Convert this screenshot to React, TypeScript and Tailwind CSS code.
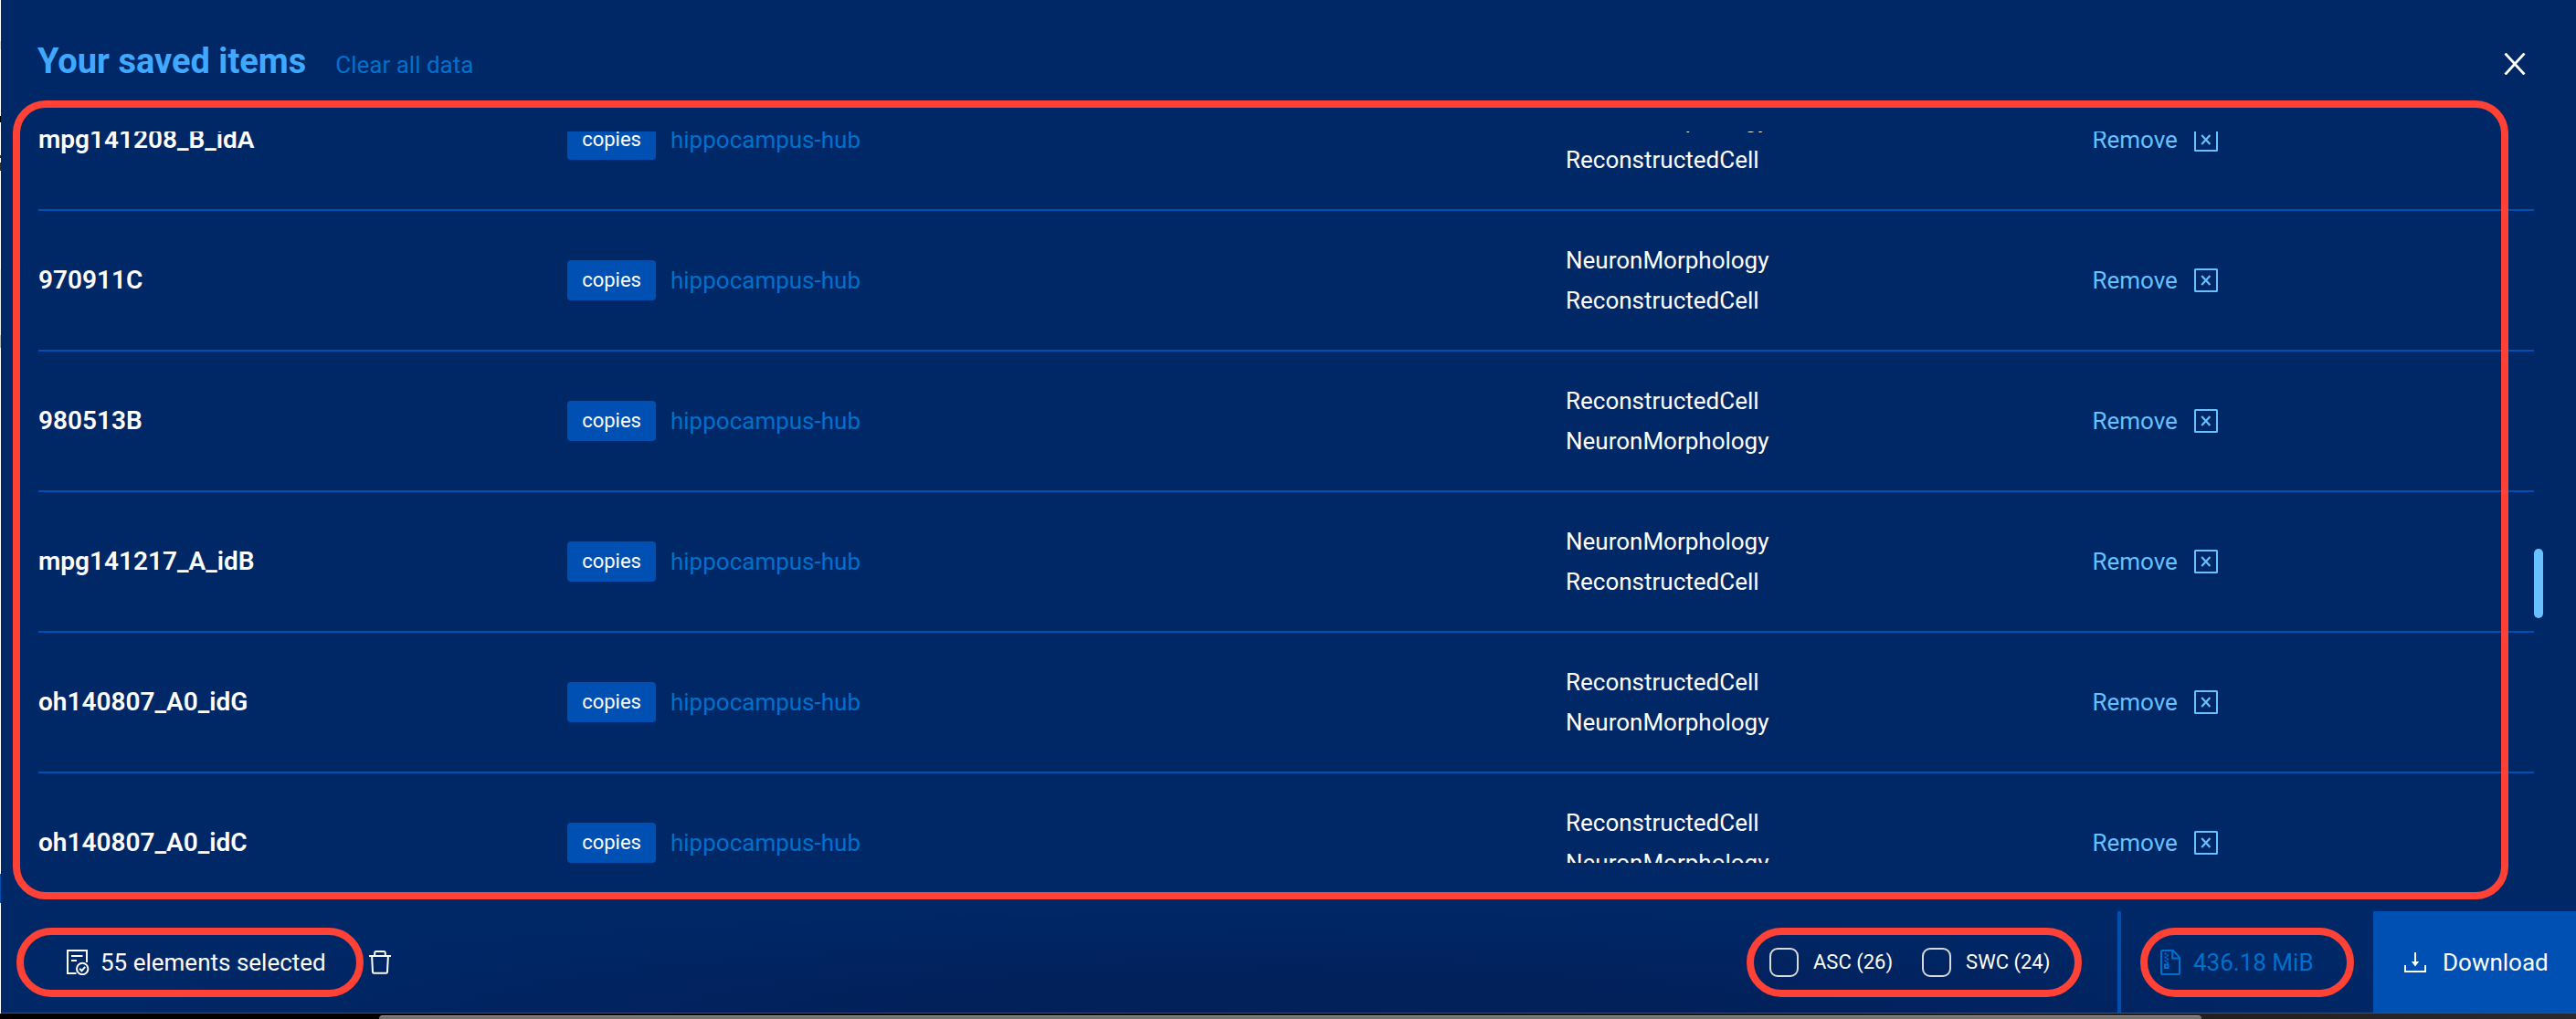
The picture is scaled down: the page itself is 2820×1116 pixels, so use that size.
import React from "react";

type Item = { name: string; types: [string, string] };

const NM = "NeuronMorphology";
const RC = "ReconstructedCell";

const items: Item[] = [
  { name: "mpg141208_B_idA", types: [NM, RC] },
  { name: "970911C", types: [NM, RC] },
  { name: "980513B", types: [RC, NM] },
  { name: "mpg141217_A_idB", types: [NM, RC] },
  { name: "oh140807_A0_idG", types: [RC, NM] },
  { name: "oh140807_A0_idC", types: [RC, NM] },
];

function CloseIcon() {
  return (
    <svg width="24" height="24" viewBox="0 0 24 24" fill="none" stroke="currentColor" strokeWidth="2.8">
      <path d="M1.5 0.5 22.5 23.5M22.5 0.5 1.5 23.5" />
    </svg>
  );
}

function BoxedXIcon() {
  return (
    <svg width="26" height="26" viewBox="0 0 26 26" fill="none" stroke="currentColor">
      <rect x="1" y="1" width="24" height="24" rx="0.5" strokeWidth="2" />
      <path d="M8.200 8 17.400 18M17.400 8 8.200 18" strokeWidth="2.200" />
    </svg>
  );
}

function DocCheckIcon() {
  return (
    <svg width="25" height="28" viewBox="0 0 25 28" fill="none" stroke="currentColor" strokeWidth="2">
      <path d="M10.500 26H1V1h21v13" />
      <path d="M5 7h12.500M5 12h6" />
      <circle cx="17.200" cy="21" r="6.200" />
      <path d="m14.200 20.800 2.300 2.400 3.700-4.400" />
    </svg>
  );
}

function TrashIcon() {
  return (
    <svg width="24" height="26" viewBox="0 0 24 26" fill="none" stroke="currentColor" strokeWidth="2">
      <path d="M0 6h24M6.200 6V2.500Q6.200 1 7.600 1h8.800q1.400 0 1.400 1.500V6M3.100 6l.9 17.400q0 1.400 1.400 1.400h13.200q1.400 0 1.400-1.400L20.900 6" />
    </svg>
  );
}

function ZipIcon() {
  return (
    <svg width="22" height="28" viewBox="0 0 22 28" fill="none" stroke="currentColor" strokeWidth="2">
      <path d="M1 2.200Q1 1 2.200 1H14l7 7.600v17.200q0 1.200-1.200 1.200H2.200Q1 27 1 25.800Z" />
      <path d="M13.200 1v8.600H21" />
      <path d="M5.600 3.500v2M7.800 5.500v2M5.600 7.500v2M7.800 9.500v2M5.600 11.500v2M7.800 13.500v2" />
      <path d="M5 16.500h3.500V20H5Z" />
    </svg>
  );
}

function DownloadIcon() {
  return (
    <svg width="24" height="22" viewBox="0 0 24 22" fill="none" stroke="currentColor" strokeWidth="2">
      <path d="M1 14v7h22v-7M12 0v11" />
      <path d="m7.800 10 4.200 5.600L16.200 10Z" fill="currentColor" stroke="none" />
    </svg>
  );
}

function FormatOption({ id, label }: { id: string; label: string }) {
  return (
    <div className="flex items-center gap-4">
      <input
        id={id}
        type="checkbox"
        className="size-8 shrink-0 appearance-none rounded-[9px] border-2 border-[#d9d9d9] checked:bg-[#0050b3]"
      />
      <label htmlFor={id} className="text-[22px] leading-8 whitespace-nowrap">
        {label}
      </label>
    </div>
  );
}

export default function App() {
  return (
    <div className="flex h-screen flex-col overflow-hidden bg-black font-['Roboto',sans-serif] text-[26px] leading-[44px] text-white">
      <div className="flex min-h-0 flex-1">
        <div className="w-px shrink-0 bg-[linear-gradient(#fff_0_45px,#ddd_45px_54px,#fff_54px_127px,#000_127px_134px,#fff_134px_170px,#333_170px_173px,#fff_173px_178px,#333_178px_187px,#fff_187px_295px,#eee_295px_367px,#bbb_367px_381px,#fff_381px_957px,#0050b3_957px_989px,#fff_989px)]" />
        <div className="flex min-w-0 flex-1 flex-col bg-[#002766]">
          <header className="flex h-36 shrink-0 items-start justify-between pt-[43px] pr-[55px] pl-10">
            <div className="flex items-baseline gap-8">
              <h1 className="text-[38px] leading-[48px] font-bold text-[#40a9ff]">Your saved items</h1>
              <button type="button" className="text-[#0070cc]">
                Clear all data
              </button>
            </div>
            <button type="button" aria-label="Close" className="mt-[15px]">
              <CloseIcon />
            </button>
          </header>

          <main className="relative flex min-h-0 flex-1 pr-9 pb-[53px] pl-[41px]">
            <div className="min-w-0 flex-1 overflow-hidden">
              <table className="-mt-[68px] w-full table-fixed border-collapse text-left">
                <colgroup>
                  <col className="w-[21.2%]" />
                  <col className="w-[40%]" />
                  <col className="w-[21.1%]" />
                  <col />
                </colgroup>
                <tbody>
                  {items.map((item) => (
                    <tr key={item.name} className="h-[154px] border-b-2 border-[#0050b3]">
                      <th scope="row" className="text-[28px] font-semibold">
                        {item.name}
                      </th>
                      <td>
                        <div className="flex items-center gap-4">
                          <span className="rounded bg-[#0050b3] px-4 text-[22px]">copies</span>
                          <a href="#hippocampus-hub" className="text-[#0070cc]">
                            hippocampus-hub
                          </a>
                        </div>
                      </td>
                      <td>
                        {item.types.map((type) => (
                          <div key={type}>{type}</div>
                        ))}
                      </td>
                      <td>
                        <button type="button" className="flex items-center gap-[18px] text-[#69c0ff]">
                          Remove
                          <BoxedXIcon />
                        </button>
                      </td>
                    </tr>
                  ))}
                </tbody>
              </table>
            </div>
            <div className="w-[10px] shrink-0">
              <div className="mt-[457px] h-[76px] rounded-full bg-[#69c0ff]" />
            </div>
            <div className="pointer-events-none absolute -top-[34px] right-[74px] bottom-[13px] left-[13px] rounded-[36px] border-8 border-[#ff4136]" />
          </main>

          <footer className="flex h-28 shrink-0 items-center border-b border-[#33507f] bg-[radial-gradient(ellipse_45%_100%_at_50%_100%,#02205a_30%,#002766)]">
            <div className="ml-[17px] flex h-[76px] w-[380px] items-center gap-3 rounded-full border-8 border-[#ff4136] pl-[47px] whitespace-nowrap">
              <DocCheckIcon />
              55 elements selected
            </div>
            <button type="button" aria-label="Remove selected elements" className="ml-1.5">
              <TrashIcon />
            </button>
            <div className="ml-auto flex h-[76px] w-[367px] items-center gap-8 rounded-full border-8 border-[#ff4136] pl-[17px]">
              <FormatOption id="format-asc" label="ASC (26)" />
              <FormatOption id="format-swc" label="SWC (24)" />
            </div>
            <div className="mr-[21px] ml-[39px] w-1 self-stretch bg-[#0050b3]" />
            <div className="flex h-[76px] w-[234px] items-center gap-[14px] rounded-full border-8 border-[#ff4136] pl-[14px] whitespace-nowrap text-[#0070cc]">
              <ZipIcon />
              436.18 MiB
            </div>
            <button
              type="button"
              className="ml-[21px] flex w-[222px] items-center gap-[18px] self-stretch bg-[#0050b3] pl-[34px]"
            >
              <DownloadIcon />
              Download
            </button>
          </footer>
        </div>
      </div>
      <div className="flex h-1.5 shrink-0 items-end bg-linear-to-r from-black to-[#2a2a2a] pr-[410px] pl-[415px]">
        <div className="h-1 flex-1 rounded-t-full border-t border-[#999] bg-[#707070]" />
      </div>
    </div>
  );
}
